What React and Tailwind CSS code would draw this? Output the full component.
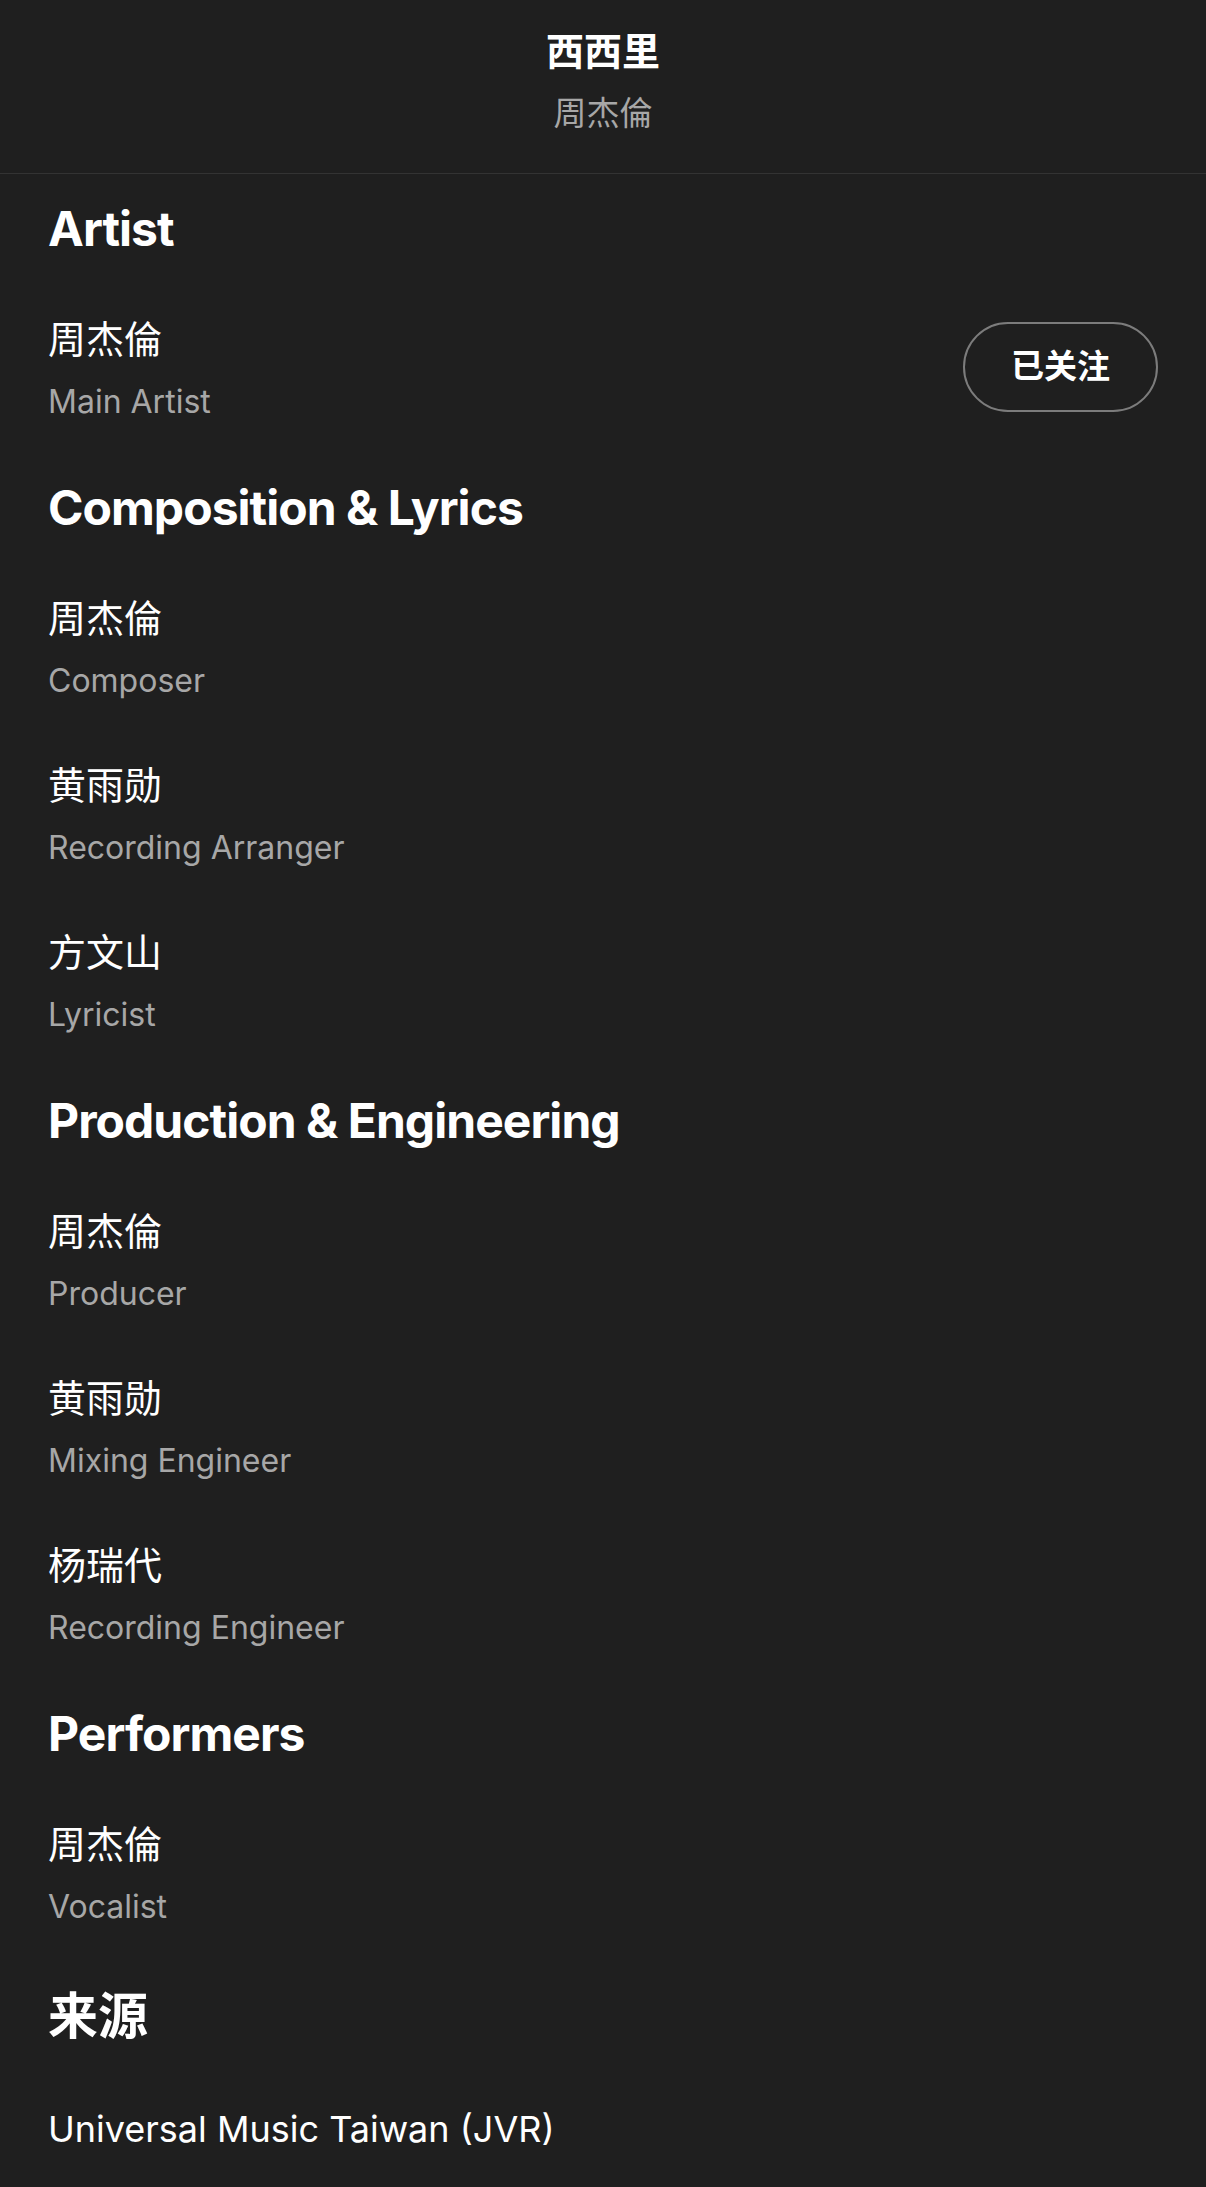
const sections = [
  {
    title: 'Artist',
    items: [{ name: '周杰倫', role: 'Main Artist', follow: true }],
  },
  {
    title: 'Composition & Lyrics',
    items: [
      { name: '周杰倫', role: 'Composer' },
      { name: '黄雨勋', role: 'Recording Arranger' },
      { name: '方文山', role: 'Lyricist' },
    ],
  },
  {
    title: 'Production & Engineering',
    items: [
      { name: '周杰倫', role: 'Producer' },
      { name: '黄雨勋', role: 'Mixing Engineer' },
      { name: '杨瑞代', role: 'Recording Engineer' },
    ],
  },
  {
    title: 'Performers',
    items: [{ name: '周杰倫', role: 'Vocalist' }],
  },
];

function Credit({ name, role, follow }) {
  return (
    <div className="flex items-center justify-between py-[27px]">
      <div className="flex flex-col">
        <span className="text-[38px] leading-[52px] text-white">{name}</span>
        <span className="mt-[13px] text-[32px] leading-[48px] text-[#a7a7a7]">{role}</span>
      </div>
      {follow && (
        <button
          type="button"
          className="mb-[5px] flex h-[90px] w-[195px] items-center justify-center rounded-full border-2 border-[#7c7c7c] text-[33px] font-semibold text-white"
        >
          已关注
        </button>
      )}
    </div>
  );
}

export default function App() {
  return (
    <div
      className="min-h-screen bg-[#1f1f1f] text-white"
      style={{ fontFamily: 'Inter, "Noto Sans CJK SC", sans-serif' }}
    >
      {/* Top bar: track + artist */}
      <div className="flex flex-col items-center pt-[27px] pb-[38px]">
        <span className="text-[38px] font-bold leading-[48px]">西西里</span>
        <span className="mt-[16px] text-[33px] leading-[44px] text-[#a7a7a7]">周杰倫</span>
      </div>
      <div className="h-px bg-[#333333]" />

      <div className="px-[48px] pt-[27px]">
        {sections.map((s) => (
          <section key={s.title} className="pb-[27px]">
            <h2 className="mb-[29px] text-[48px] font-bold leading-[56px] tracking-[-0.02em]">{s.title}</h2>
            {s.items.map((it, i) => (
              <Credit key={i} {...it} />
            ))}
          </section>
        ))}

        <section>
          <h2 className="mb-[27px] pt-[2px] text-[50px] font-bold leading-[58px]">来源</h2>
          <div className="pt-[31px] text-[36px] leading-[52px] text-white">Universal Music Taiwan (JVR)</div>
        </section>
      </div>
    </div>
  );
}
